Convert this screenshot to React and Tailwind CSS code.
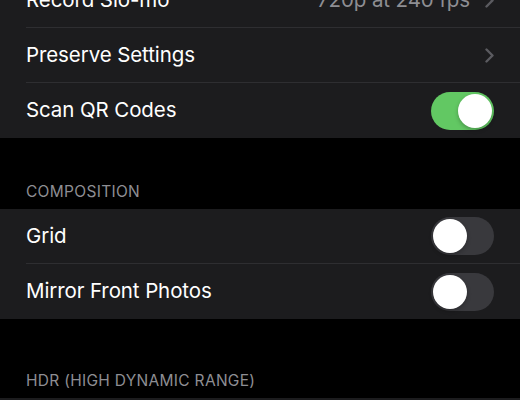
import React from 'react';

const font = { fontFamily: 'Inter, "Noto Sans", sans-serif' };

function Chevron() {
  return (
    <svg width="9" height="15" viewBox="0 0 9 15" className="shrink-0">
      <path d="M1.5 1.5 L7.5 7.5 L1.5 13.5" fill="none" stroke="#5b5b60" strokeWidth="2.4" strokeLinecap="round" strokeLinejoin="round" />
    </svg>
  );
}

function Toggle({ on }) {
  return (
    <div className={`w-[63px] h-[38px] rounded-full p-[2px] flex items-center ${on ? 'bg-[#62c863] justify-end' : 'bg-[#39393d] justify-start'}`}>
      <div className="w-[34px] h-[34px] rounded-full bg-white shadow-[0_2px_4px_rgba(0,0,0,0.25)]" />
    </div>
  );
}

function Row({ label, value, chevron, toggle, last }) {
  return (
    <div className="h-[55px] pl-[26px] bg-[#1c1c1e]">
      <div className={`h-full flex items-center justify-between pr-[26px] ${last ? '' : 'border-b border-[#2e2e31]'}`}>
        <span className="text-[20.5px] text-white tracking-[-0.1px]">{label}</span>
        <div className="flex items-center gap-[15px]">
          {value && <span className="text-[20.5px] text-[#8e8e93] tracking-[-0.1px]">{value}</span>}
          {chevron && <Chevron />}
          {toggle !== undefined && <Toggle on={toggle} />}
        </div>
      </div>
    </div>
  );
}

function Header({ title, h }) {
  return (
    <div className={`${h} flex items-end pl-[26px] pb-[8px]`}>
      <span className="text-[15.5px] leading-[18px] text-[#8e8e93] tracking-[0.3px]">{title}</span>
    </div>
  );
}

export default function App() {
  return (
    <div className="w-[520px] h-[400px] overflow-hidden bg-black" style={font}>
      <div className="-mt-[27px]">
        <Row label="Record Slo-mo" value="720p at 240 fps" chevron />
        <Row label="Preserve Settings" chevron />
        <Row label="Scan QR Codes" toggle={true} last />
        <Header title="COMPOSITION" h="h-[71px]" />
        <Row label="Grid" toggle={false} />
        <Row label="Mirror Front Photos" toggle={false} last />
        <Header title="HDR (HIGH DYNAMIC RANGE)" h="h-[79px]" />
        <Row label="Smart HDR" toggle={true} />
      </div>
    </div>
  );
}
